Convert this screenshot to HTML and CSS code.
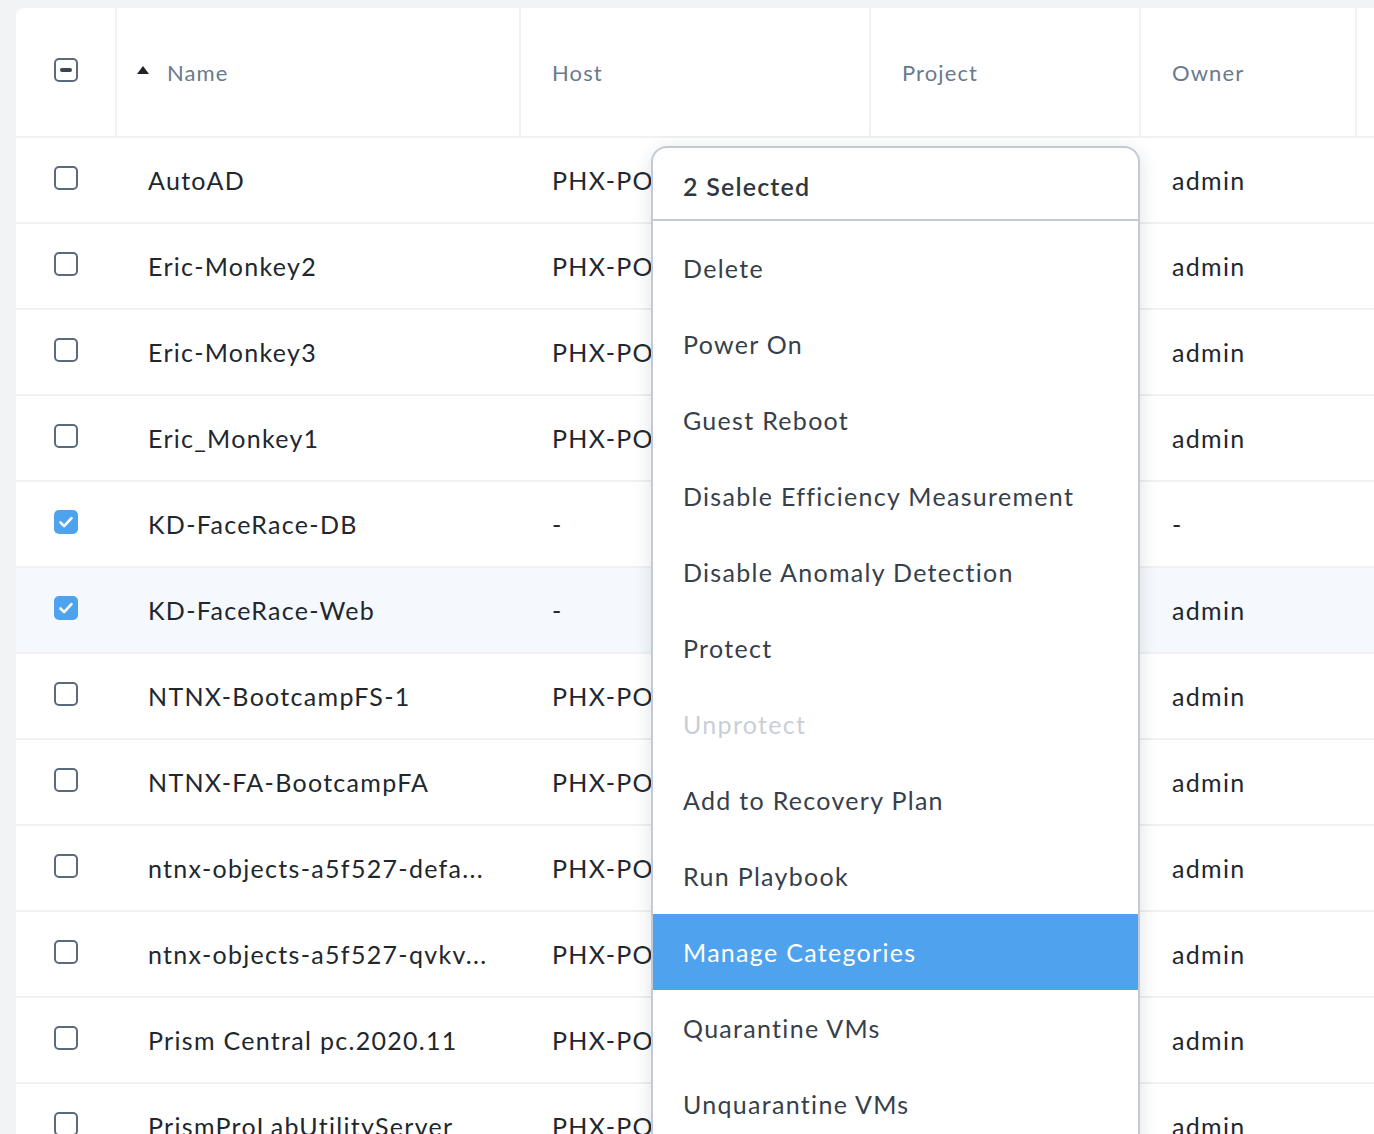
FILE: index.html
```html
<!DOCTYPE html>
<html>
<head>
<meta charset="utf-8">
<link rel="stylesheet" href="styles.css">
</head>
<body>
<div class="page">
  <div class="card">
    <div class="row head">
      <div class="cell cb"><span class="box partial"><span class="dash"></span></span></div>
      <div class="cell hname"><span class="tri"></span>Name</div>
      <div class="cell">Host</div>
      <div class="cell">Project</div>
      <div class="cell">Owner</div>
      <div class="cell last"></div>
    </div>
    <div class="row"><div class="cell cb"><span class="box"></span></div><div class="cell name">AutoAD</div><div class="cell">PHX-POC123-1</div><div class="cell"></div><div class="cell">admin</div><div class="cell"></div></div>
    <div class="row"><div class="cell cb"><span class="box"></span></div><div class="cell name">Eric-Monkey2</div><div class="cell">PHX-POC123-2</div><div class="cell"></div><div class="cell">admin</div><div class="cell"></div></div>
    <div class="row"><div class="cell cb"><span class="box"></span></div><div class="cell name">Eric-Monkey3</div><div class="cell">PHX-POC123-3</div><div class="cell"></div><div class="cell">admin</div><div class="cell"></div></div>
    <div class="row"><div class="cell cb"><span class="box"></span></div><div class="cell name">Eric_Monkey1</div><div class="cell">PHX-POC123-1</div><div class="cell"></div><div class="cell">admin</div><div class="cell"></div></div>
    <div class="row"><div class="cell cb"><span class="box checked"><svg viewBox="0 0 24 24" width="24" height="24"><path d="M6.5 12.5l3.6 3.6 7.4-8" fill="none" stroke="#fff" stroke-width="2.6" stroke-linecap="round" stroke-linejoin="round"/></svg></span></div><div class="cell name">KD-FaceRace-DB</div><div class="cell">-</div><div class="cell"></div><div class="cell">-</div><div class="cell"></div></div>
    <div class="row sel"><div class="cell cb"><span class="box checked"><svg viewBox="0 0 24 24" width="24" height="24"><path d="M6.5 12.5l3.6 3.6 7.4-8" fill="none" stroke="#fff" stroke-width="2.6" stroke-linecap="round" stroke-linejoin="round"/></svg></span></div><div class="cell name">KD-FaceRace-Web</div><div class="cell">-</div><div class="cell"></div><div class="cell">admin</div><div class="cell"></div></div>
    <div class="row"><div class="cell cb"><span class="box"></span></div><div class="cell name">NTNX-BootcampFS-1</div><div class="cell">PHX-POC123-2</div><div class="cell"></div><div class="cell">admin</div><div class="cell"></div></div>
    <div class="row"><div class="cell cb"><span class="box"></span></div><div class="cell name">NTNX-FA-BootcampFA</div><div class="cell">PHX-POC123-3</div><div class="cell"></div><div class="cell">admin</div><div class="cell"></div></div>
    <div class="row"><div class="cell cb"><span class="box"></span></div><div class="cell name">ntnx-objects-a5f527-defa...</div><div class="cell">PHX-POC123-1</div><div class="cell"></div><div class="cell">admin</div><div class="cell"></div></div>
    <div class="row"><div class="cell cb"><span class="box"></span></div><div class="cell name">ntnx-objects-a5f527-qvkv...</div><div class="cell">PHX-POC123-2</div><div class="cell"></div><div class="cell">admin</div><div class="cell"></div></div>
    <div class="row"><div class="cell cb"><span class="box"></span></div><div class="cell name">Prism Central pc.2020.11</div><div class="cell">PHX-POC123-3</div><div class="cell"></div><div class="cell">admin</div><div class="cell"></div></div>
    <div class="row"><div class="cell cb"><span class="box"></span></div><div class="cell name">PrismProLabUtilityServer</div><div class="cell">PHX-POC123-1</div><div class="cell"></div><div class="cell">admin</div><div class="cell"></div></div>
  </div>

  <div class="menu">
    <div class="menu-head">2 Selected</div>
    <ul class="menu-list">
      <li>Delete</li>
      <li>Power On</li>
      <li>Guest Reboot</li>
      <li>Disable Efficiency Measurement</li>
      <li>Disable Anomaly Detection</li>
      <li>Protect</li>
      <li class="disabled">Unprotect</li>
      <li>Add to Recovery Plan</li>
      <li>Run Playbook</li>
      <li class="active">Manage Categories</li>
      <li>Quarantine VMs</li>
      <li>Unquarantine VMs</li>
    </ul>
  </div>
</div>
</body>
</html>
```

FILE: styles.css
```css
html, body {
  margin: 0;
  padding: 0;
  height: 100%;
  overflow: hidden;
  background: #f2f3f5;
}
body {
  font-family: Lato, "Open Sans", sans-serif;
  font-size: 25px;
  letter-spacing: 1.3px;
  color: #22272e;
}
.page {
  position: relative;
  padding: 8px 0 0 16px;
}
.card {
  background: #fff;
  border-top-left-radius: 8px;
  width: 1560px;
}
.row {
  display: grid;
  grid-template-columns: 101px 404px 350px 270px 216px 219px;
  height: 86px;
  border-bottom: 2px solid #eff1f3;
  box-sizing: border-box;
}
.row.sel {
  background: #f5f9fe;
}
.row.head {
  height: 130px;
  color: #6a7a8e;
  font-size: 22px;
  letter-spacing: 1.1px;
}
.cell {
  display: flex;
  align-items: center;
  padding-left: 31px;
  white-space: nowrap;
  overflow: hidden;
}
.head .cell {
  border-right: 2px solid #eff1f3;
}
.head .cell.last {
  border-right: none;
}
.cell.cb {
  padding-left: 38px;
}
.row .cell.cb .box {
  margin-top: -4px;
}
.head .cell.cb .box {
  margin-top: -4px;
}
.hname {
  padding-left: 20px;
}
.tri {
  width: 0;
  height: 0;
  border-left: 6px solid transparent;
  border-right: 6px solid transparent;
  border-bottom: 8px solid #1f2329;
  margin-right: 18px;
  margin-top: -4px;
}
.box {
  width: 24px;
  height: 24px;
  box-sizing: border-box;
  border: 2px solid #5a6b80;
  border-radius: 5px;
  display: flex;
  align-items: center;
  justify-content: center;
}
.box.checked {
  border: none;
  background: #4ea3ef;
}
.box.checked svg {
  display: block;
}
.dash {
  width: 12px;
  height: 4px;
  border-radius: 2px;
  background: #3a4654;
}
.menu {
  position: absolute;
  left: 651px;
  top: 146px;
  width: 489px;
  box-sizing: border-box;
  background: #fff;
  border: 2px solid #c4c9d3;
  border-bottom: none;
  border-radius: 16px 16px 0 0;
  box-shadow: 0 4px 18px rgba(30, 40, 60, 0.14);
  color: #36404b;
  height: 1000px;
}
.menu-head {
  height: 67px;
  padding-top: 4px;
  border-bottom: 2px solid #c4c9d3;
  display: flex;
  align-items: center;
  padding-left: 30px;
  font-weight: 600;
  color: #2f3742;
  letter-spacing: 1.2px;
}
.menu-list {
  list-style: none;
  margin: 0;
  padding: 9px 0 0 0;
}
.menu-list li {
  height: 76px;
  display: flex;
  align-items: center;
  padding-left: 30px;
}
.menu-list li.disabled {
  color: #c9cfd8;
}
.menu-list li.active {
  background: #4fa3ee;
  color: #fff;
}
```
